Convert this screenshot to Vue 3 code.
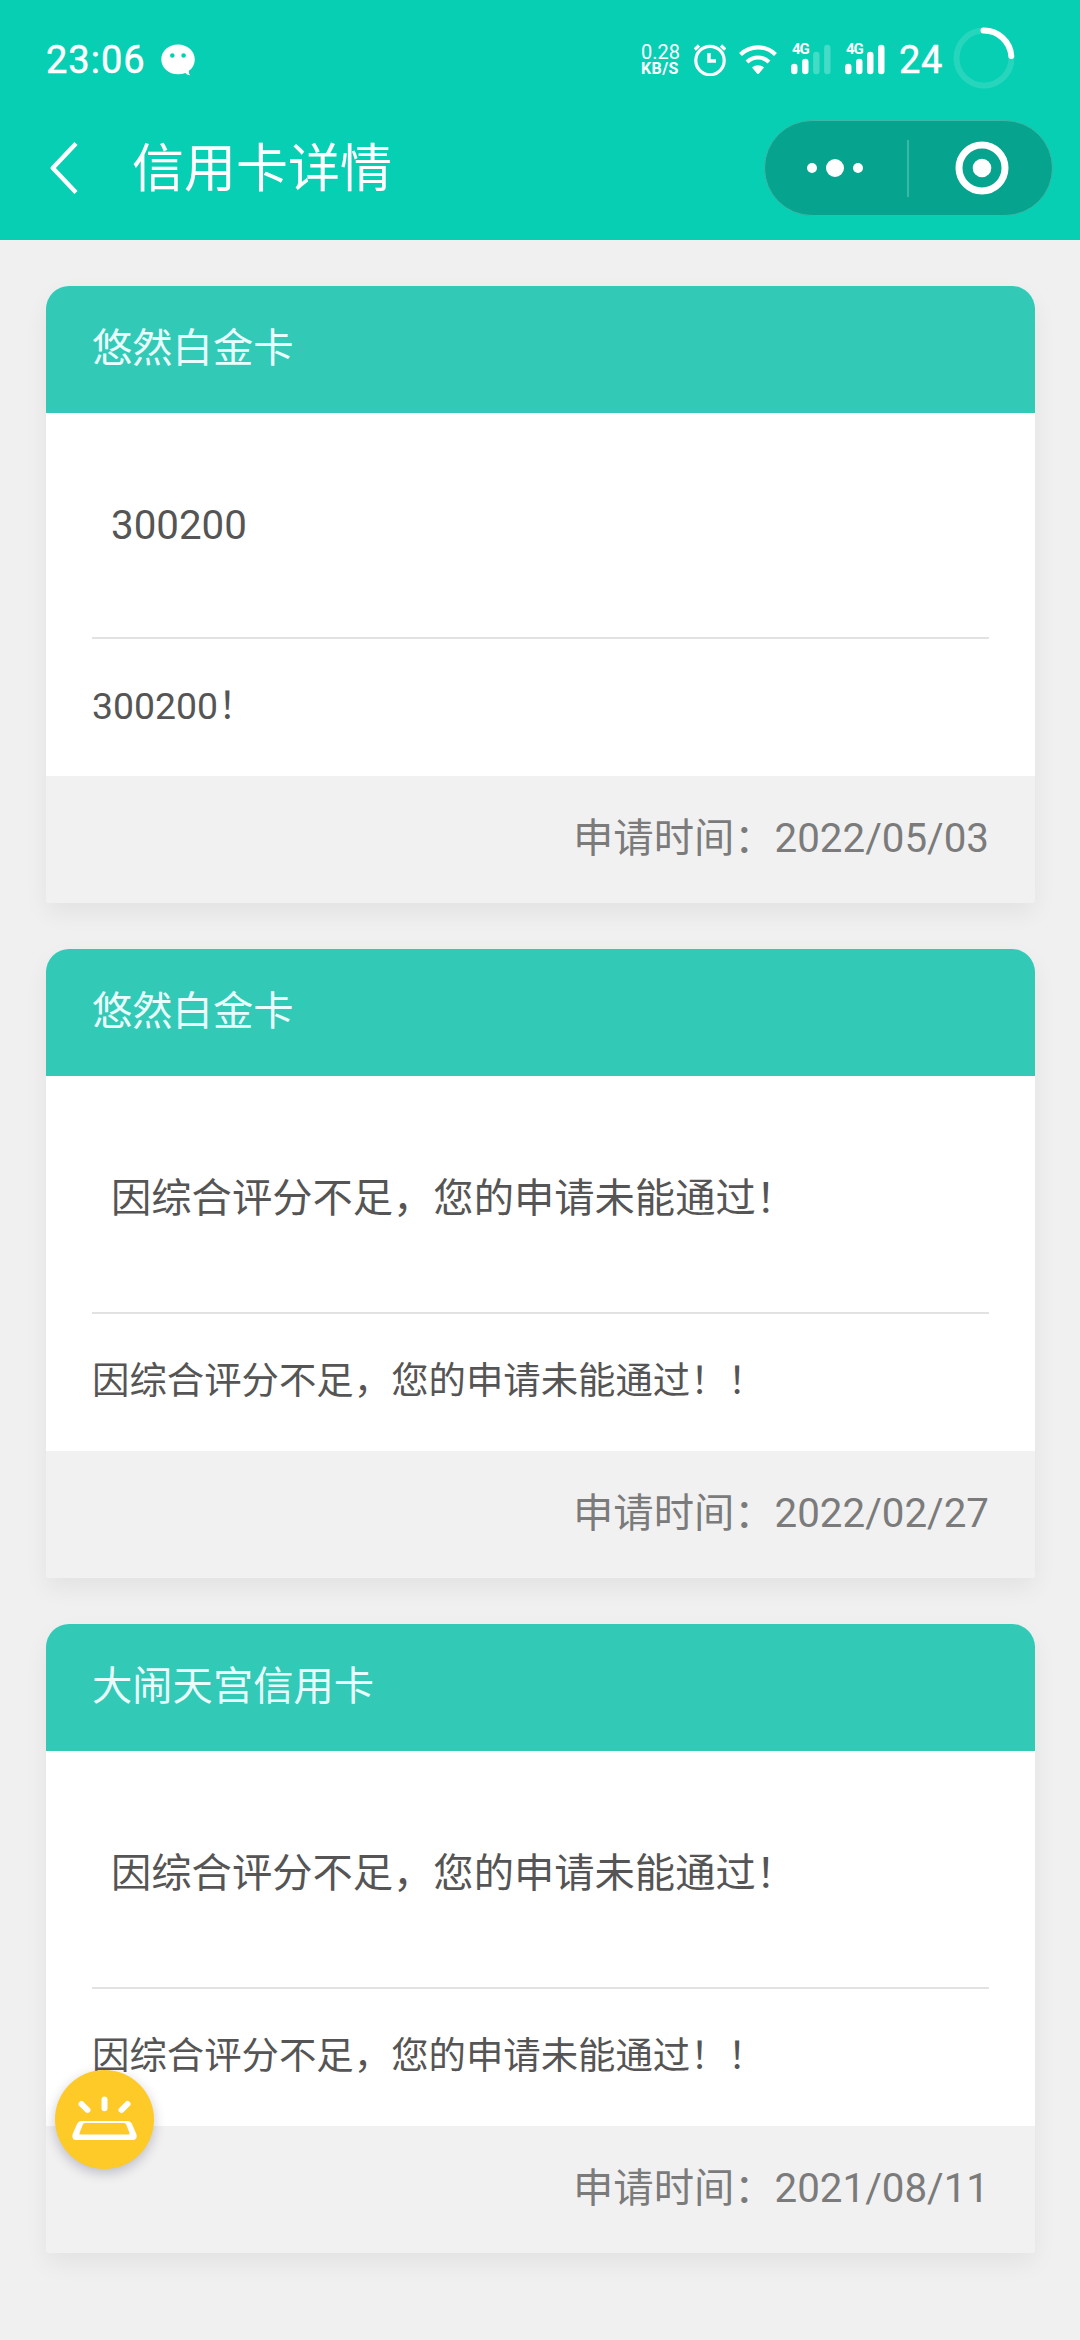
<script setup>
const cards = [
  { name: '悠然白金卡', message: '300200', note: '300200！', date: '2022/05/03', compact: true },
  { name: '悠然白金卡', message: '因综合评分不足，您的申请未能通过！', note: '因综合评分不足，您的申请未能通过！！', date: '2022/02/27' },
  { name: '大闹天宫信用卡', message: '因综合评分不足，您的申请未能通过！', note: '因综合评分不足，您的申请未能通过！！', date: '2021/08/11' },
]
const signals = [
  { id: 1, level: 2 },
  { id: 2, level: 4 },
]
const bars = [
  { x: 3, top: 23 },
  { x: 14, top: 18 },
  { x: 25, top: 11 },
  { x: 36, top: 4 },
]
</script>

<template>
  <div class="page">
    <header class="top">
      <div class="status">
        <span class="clock">23:06</span>
        <svg class="chat" viewBox="0 0 34 32">
          <path fill="#fff" fill-rule="evenodd" d="M17 0.5C7.600.5.3 7 .3 15.400S7.600 30.200 17 30.200c2.700 0 5.200-.4 7.400-1.200 1.500 1.400 3 2.200 4.600 2.300-.9-1.200-1.200-2.900-1.100-4.500 3.700-2.700 5.900-6.800 5.900-11.400C33.800 7 26.400.5 17 .5ZM11.300 9.200a2.300 2.300 0 1 1 0 4.600 2.300 2.300 0 0 1 0-4.600Zm11.300 0a2.300 2.300 0 1 1 0 4.600 2.300 2.300 0 0 1 0-4.600Z" />
        </svg>
        <div class="speed">
          <span class="rate">0.28</span>
          <span class="unit">KB/S</span>
        </div>
        <svg class="alarm" viewBox="0 0 32 32" fill="none" stroke="#fff">
          <circle cx="16" cy="16.500" r="14.200" stroke-width="3.200" />
          <path d="M15 9V17H22" stroke-width="3.400" />
          <path d="M0.800 5.500 5 1.500M31.200 5.500 27 1.500" stroke-width="3.200" />
        </svg>
        <svg class="wifi" viewBox="0 0 38 30" fill="none" stroke="#fff" stroke-width="4.200">
          <path d="M1.500 9.500C11.500 0 26.500 0 36.500 9.500" />
          <path d="M8 17C14.500 11 23.500 11 30 17" />
          <path d="M13 22.500C16.500 19.600 21.500 19.600 25 22.500L20 28.600Q19 29.600 18 28.600Z" fill="#fff" stroke="none" />
        </svg>
        <div v-for="s in signals" :key="s.id" class="signal">
          <span class="net">4G</span>
          <svg viewBox="0 0 40 32" stroke="#fff" stroke-width="6.400" stroke-linecap="round">
            <line v-for="(b, i) in bars" :key="b.x" :x1="b.x + .3" :x2="b.x + .3" :y1="b.top" y2="27" :stroke-opacity="i < s.level ? 1 : .25" />
          </svg>
        </div>
        <span class="percent">24</span>
        <svg class="ring" viewBox="0 0 62 62" fill="none" stroke="#fff" stroke-width="6">
          <circle cx="31" cy="31" r="27.500" stroke-opacity=".13" />
          <path d="M30.500 3.500A27.500 27.500 0 0 1 58.300 29" stroke-linecap="round" />
        </svg>
      </div>
      <div class="nav">
        <svg class="back" viewBox="0 0 28 54" fill="none" stroke="#fff" stroke-width="4.400">
          <path d="M26 2.500 2.800 27 26 51.500" stroke-linejoin="round" />
        </svg>
        <h1>信用卡详情</h1>
        <div class="capsule">
          <svg class="more" viewBox="0 0 56 18" fill="#fff">
            <circle cx="5" cy="9" r="5" /><circle cx="28" cy="9" r="9" /><circle cx="51" cy="9" r="5" />
          </svg>
          <i class="divider"></i>
          <svg class="close" viewBox="0 0 54 54">
            <circle cx="27" cy="27" r="23" fill="none" stroke="#fff" stroke-width="7" />
            <circle cx="27" cy="27" r="9.300" fill="#fff" />
          </svg>
        </div>
      </div>
    </header>

    <main>
      <article v-for="c in cards" :key="c.date" class="card">
        <h2>{{ c.name }}</h2>
        <div class="body">
          <p class="message" :class="{ compact: c.compact }">{{ c.message }}</p>
          <p class="note">{{ c.note }}</p>
        </div>
        <footer>申请时间：{{ c.date }}</footer>
      </article>
    </main>

    <button class="float" type="button">
      <svg viewBox="0 0 99 99" fill="none" stroke="#fff" stroke-width="6" stroke-linecap="round">
        <path d="M26.500 34 32.500 40M49.500 29.500V38.200M72.500 34 66.500 40" />
        <path fill="#fff" fill-rule="evenodd" stroke="none" d="M26.500 51H72.500Q75.500 51 77 54L81.500 64.500Q82.500 70 77.500 70H21.500Q16.500 70 17.500 64.500L22 54Q23.500 51 26.500 51ZM30 53Q28.500 53 27.800 54.500L24.500 63Q24 64.500 25.500 64.500H73.500Q75 64.500 74.500 63L71.200 54.500Q70.500 53 69 53Z" />
      </svg>
    </button>
  </div>
</template>

<style>
body {
  margin: 0;
  background: #f0f0f0;
}
</style>

<style scoped>
.page {
  position: relative;
  width: 1080px;
  height: 2340px;
  overflow: hidden;
  background: #f0f0f0;
  font-family: Roboto, "Noto Sans CJK SC", sans-serif;
}
h1, h2, p {
  margin: 0;
  font-weight: 400;
}
svg {
  display: block;
  flex: none;
}
.top {
  height: 240px;
  box-sizing: border-box;
  background: #07cfb3;
  color: #fff;
}
.status {
  display: flex;
  align-items: center;
  height: 120px;
  padding: 0 65px 0 46px;
}
.clock, .percent {
  font-size: 38px;
  line-height: 40px;
  font-weight: 400;
  -webkit-text-stroke: .5px #fff;
}
.clock {
  width: 115px;
  letter-spacing: 1px;
}
.chat {
  width: 34px;
  height: 32px;
}
.speed {
  display: flex;
  flex-direction: column;
  width: 41px;
  margin: 0 12px 0 auto;
}
.rate {
  font-size: 20px;
  line-height: 17px;
  font-weight: 400;
}
.unit {
  font-size: 16px;
  line-height: 15px;
  font-weight: 700;
  letter-spacing: .4px;
}
.alarm {
  width: 32px;
  height: 32px;
  margin-right: 13px;
}
.wifi {
  width: 38px;
  height: 30px;
  margin-right: 14px;
}
.signal {
  position: relative;
  width: 40px;
  height: 32px;
  margin-right: 14px;
}
.signal svg {
  width: 40px;
  height: 32px;
}
.net {
  position: absolute;
  left: 1px;
  top: -2px;
  font-size: 15px;
  line-height: 15px;
  font-weight: 700;
  letter-spacing: -1px;
}
.percent {
  width: 54px;
  letter-spacing: .6px;
}
.ring {
  width: 62px;
  height: 62px;
  margin-top: -5px;
}
.nav {
  display: flex;
  align-items: center;
  height: 96px;
  padding: 0 27px 0 50px;
}
.back {
  width: 28px;
  height: 54px;
}
h1 {
  height: 72px;
  margin-left: 54px;
  font-size: 52px;
  line-height: 76px;
}
.capsule {
  display: flex;
  align-items: center;
  width: 289px;
  height: 96px;
  margin-left: auto;
  box-sizing: border-box;
  border: 1px solid #3bb9a7;
  border-radius: 48px;
  background: #06a48e;
}
.more {
  width: 56px;
  height: 18px;
  margin-left: 42px;
}
.divider {
  width: 2px;
  height: 57px;
  margin-left: 44px;
  background: #3ab7a5;
}
.close {
  width: 54px;
  height: 54px;
  margin-left: 46px;
}
main {
  display: flex;
  flex-direction: column;
  gap: 46px;
  padding: 46px 45px 0 46px;
}
.card {
  border-radius: 23px 23px 4px 4px;
  background: #fff;
  box-shadow: 0 10px 24px rgba(0, 0, 0, .06);
}
h2 {
  height: 127px;
  padding: 0 46px;
  border-radius: 23px 23px 0 0;
  background: #32c9b7;
  color: #e9fffc;
  font-size: 40.300px;
  line-height: 125px;
}
.body {
  padding: 0 46px;
  color: #555;
}
.message {
  height: 236px;
  padding-left: 19px;
  border-bottom: 2px solid #e2e2e2;
  font-size: 40.300px;
  line-height: 245px;
}
.message.compact {
  height: 224px;
  line-height: 225px;
}
.note {
  height: 137px;
  font-size: 37.400px;
  line-height: 134px;
}
footer {
  height: 127px;
  padding: 0 46px;
  border-radius: 0 0 4px 4px;
  background: #f1f1f1;
  color: #7b7b7b;
  font-size: 40.300px;
  line-height: 125px;
  text-align: right;
}
.float {
  position: absolute;
  left: 55px;
  top: 2070px;
  width: 99px;
  height: 99px;
  padding: 0;
  border: 0;
  border-radius: 50%;
  background: #fdca27;
  box-shadow: 0 4px 12px rgba(50, 50, 90, .28);
}
.float svg {
  width: 99px;
  height: 99px;
}
</style>
